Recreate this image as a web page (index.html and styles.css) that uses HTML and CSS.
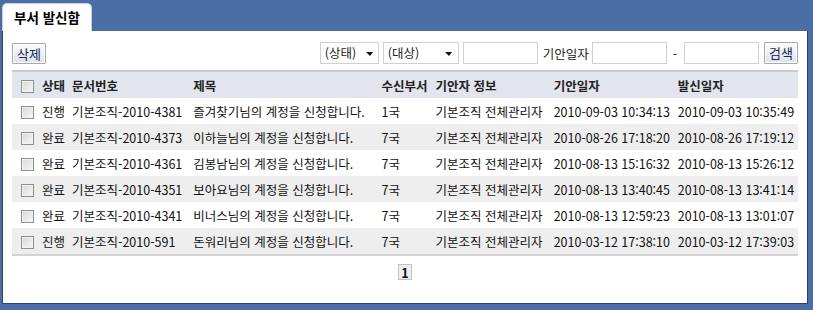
FILE: index.html
```html
<!DOCTYPE html>
<html lang="ko">

<head>
    <meta charset="UTF-8">
    <meta name="viewport" content="width=device-width, initial-scale=1.0">
    <title>부서 발신함</title>
    <link rel="stylesheet" href="styles.css">
</head>

<body>

    <div class="tabs">
        <div class="tab">부서 발신함</div>
    </div>

    <div class="panel">
        <div class="toolbar">
            <button class="btn">삭제</button>

            <div class="search">
                <span class="select select-state">(상태)</span>
                <span class="select select-target">(대상)</span>
                <input type="text" class="field">
                <span class="label">기안일자</span>
                <input type="text" class="field">
                <span class="dash">-</span>
                <input type="text" class="field">
                <button class="btn btn-search">검색</button>
            </div>
        </div>

        <table class="list">
            <colgroup>
                <col class="c-check">
                <col class="c-state">
                <col class="c-no">
                <col class="c-title">
                <col class="c-dept">
                <col class="c-writer">
                <col class="c-date">
                <col class="c-date2">
            </colgroup>
            <thead>
                <tr>
                    <th><span class="check"></span></th>
                    <th>상태</th>
                    <th>문서번호</th>
                    <th>제목</th>
                    <th>수신부서</th>
                    <th>기안자 정보</th>
                    <th>기안일자</th>
                    <th>발신일자</th>
                </tr>
            </thead>
            <tbody>
                <tr>
                    <td><span class="check"></span></td>
                    <td>진행</td>
                    <td>기본조직-2010-4381</td>
                    <td>즐겨찾기님의 계정을 신청합니다.</td>
                    <td>1국</td>
                    <td>기본조직 전체관리자</td>
                    <td>2010-09-03 10:34:13</td>
                    <td>2010-09-03 10:35:49</td>
                </tr>
                <tr>
                    <td><span class="check"></span></td>
                    <td>완료</td>
                    <td>기본조직-2010-4373</td>
                    <td>이하늘님의 계정을 신청합니다.</td>
                    <td>7국</td>
                    <td>기본조직 전체관리자</td>
                    <td>2010-08-26 17:18:20</td>
                    <td>2010-08-26 17:19:12</td>
                </tr>
                <tr>
                    <td><span class="check"></span></td>
                    <td>완료</td>
                    <td>기본조직-2010-4361</td>
                    <td>김봉남님의 계정을 신청합니다.</td>
                    <td>7국</td>
                    <td>기본조직 전체관리자</td>
                    <td>2010-08-13 15:16:32</td>
                    <td>2010-08-13 15:26:12</td>
                </tr>
                <tr>
                    <td><span class="check"></span></td>
                    <td>완료</td>
                    <td>기본조직-2010-4351</td>
                    <td>보아요님의 계정을 신청합니다.</td>
                    <td>7국</td>
                    <td>기본조직 전체관리자</td>
                    <td>2010-08-13 13:40:45</td>
                    <td>2010-08-13 13:41:14</td>
                </tr>
                <tr>
                    <td><span class="check"></span></td>
                    <td>완료</td>
                    <td>기본조직-2010-4341</td>
                    <td>비너스님의 계정을 신청합니다.</td>
                    <td>7국</td>
                    <td>기본조직 전체관리자</td>
                    <td>2010-08-13 12:59:23</td>
                    <td>2010-08-13 13:01:07</td>
                </tr>
                <tr>
                    <td><span class="check"></span></td>
                    <td>진행</td>
                    <td>기본조직-2010-591</td>
                    <td>돈워리님의 계정을 신청합니다.</td>
                    <td>7국</td>
                    <td>기본조직 전체관리자</td>
                    <td>2010-03-12 17:38:10</td>
                    <td>2010-03-12 17:39:03</td>
                </tr>
            </tbody>
        </table>

        <div class="paging">
            <span class="page">1</span>
        </div>
    </div>

</body>

</html>
```

FILE: styles.css
```css
body {
    margin: 0;
    background-color: #4a6ea6;
    font-family: "Noto Sans CJK KR", "Liberation Sans", sans-serif;
    font-size: 12.5px;
    color: #111;
}

/* tab strip */
.tabs {
    display: flex;
    padding: 3px 0 0 2px;
    height: 28px;
}

.tab {
    width: 90px;
    height: 28px;
    line-height: 27px;
    background-color: white;
    border: 1px solid #c9cfd9;
    border-bottom: none;
    border-radius: 5px 5px 0 0;
    box-sizing: border-box;
    text-align: center;
    font-size: 13.5px;
    font-weight: bold;
    color: #000;
}

.panel {
    background-color: white;
    margin: 0 5px 0 2px;
    height: 273px;
    box-sizing: border-box;
    border-left: 1px solid #2c446c;
    border-right: 1px solid #2c446c;
    border-bottom: 1px solid #2c446c;
    padding: 11px 9px 0 9px;
}

/* toolbar */
.toolbar {
    display: flex;
    justify-content: space-between;
    align-items: flex-start;
    height: 22px;
}

.btn {
    font-family: inherit;
    font-size: 13px;
    height: 21px;
    padding: 0 4px;
    line-height: 18px;
    color: #1a2850;
    background: linear-gradient(#fbfcfd, #dde2ea);
    border: 1px solid #a4a7ad;
    border-radius: 1px;
    box-shadow: inset 0 0 0 1px #ffffff;
    margin-top: 1px;
}

.btn-search {
    margin-top: 0;
    height: 22px;
    margin-left: 5px;
}

.search {
    display: flex;
    align-items: center;
    height: 22px;
}

.select {
    position: relative;
    height: 22px;
    box-sizing: border-box;
    border: 1px solid #d0d0d0;
    line-height: 19px;
    padding-left: 4px;
    color: #222;
    margin-right: 4px;
}

.select::after {
    content: "";
    position: absolute;
    top: 9px;
    right: 5px;
    border-left: 4px solid transparent;
    border-right: 3px solid transparent;
    border-top: 4px solid #111;
}

.select-state {
    width: 59px;
}

.select-target {
    width: 76px;
}

.select-target::after {
    right: 6px;
}

.field {
    width: 75px;
    height: 22px;
    box-sizing: border-box;
    border: 1px solid #d0d0d0;
    padding: 0 3px;
    margin: 0;
}

.label {
    margin: 0 3px 0 5px;
    color: #222;
}

.dash {
    margin: 0 7px 0 6px;
    color: #222;
}

/* list table */
.list {
    width: 100%;
    margin-top: 6px;
    border-collapse: collapse;
    table-layout: fixed;
    border-bottom: 2px solid #d2d2d2;
}

.c-check { width: 30px; }
.c-state { width: 30px; }
.c-no { width: 121px; }
.c-title { width: 188px; }
.c-dept { width: 54px; }
.c-writer { width: 118px; }
.c-date { width: 124px; }
.c-date2 { width: 120px; }

.list th,
.list td {
    padding: 0;
    text-align: left;
    white-space: nowrap;
    overflow: hidden;
}

.list th {
    height: 26px;
    background-color: #e3e5ee;
    border-top: 2px solid #c8c9ce;
    font-weight: bold;
    color: #222;
}

.list td {
    height: 26px;
}

.list tbody tr:nth-child(even) td {
    background-color: #eeeeee;
}

.list th:first-child,
.list td:first-child {
    text-align: center;
}

.check {
    display: inline-block;
    width: 13px;
    height: 13px;
    box-sizing: border-box;
    border: 1px solid #8e8f8f;
    background: linear-gradient(135deg, #d7d7d7, #f7f7f7);
    box-shadow: inset 0 0 0 1px #f2f2f2;
    vertical-align: middle;
    margin-top: -2px;
}

/* paging */
.paging {
    text-align: center;
    margin-top: 7px;
}

.page {
    display: inline-block;
    padding: 0 2px;
    height: 16px;
    line-height: 15px;
    box-sizing: border-box;
    border: 1px solid #c2c2c2;
    background-color: #efefef;
    font-weight: bold;
    color: #111;
}
```
